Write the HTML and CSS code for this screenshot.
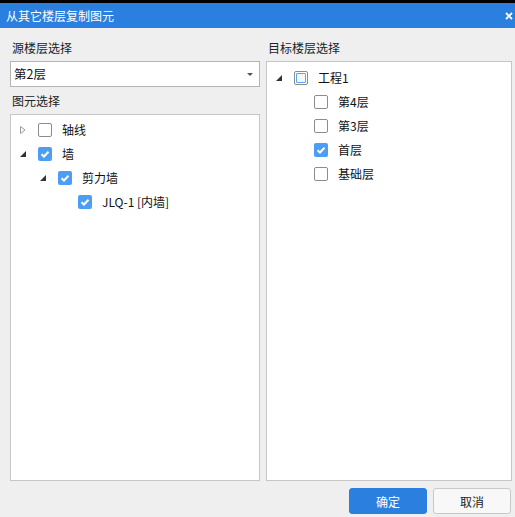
FILE: index.html
```html
<!DOCTYPE html>
<html lang="zh">
<head>
<meta charset="utf-8">
<title>从其它楼层复制图元</title>
<link rel="stylesheet" href="styles.css">
</head>
<body>
<div class="dialog">
  <div class="topline"></div>
  <div class="titlebar">
    <span class="title">从其它楼层复制图元</span>
    <svg class="close" width="8" height="8" viewBox="0 0 8 8"><path d="M1 1 L7 7 M7 1 L1 7" stroke="#fff" stroke-width="1.8"/></svg>
  </div>
  <div class="body">
    <div class="col left">
      <div class="label">源楼层选择</div>
      <div class="select">
        <span>第2层</span>
        <svg class="arrow" width="6" height="3" viewBox="0 0 6 3"><path d="M0 0 L6 0 L3 3 Z" fill="#555"/></svg>
      </div>
      <div class="label label2">图元选择</div>
      <div class="panel">
        <div class="row lv0">
          <span class="tog"><svg width="6" height="8" viewBox="0 0 6 8"><path d="M0.5 0.5 L5 4 L0.5 7.5 Z" fill="none" stroke="#9a9a9a"/></svg></span>
          <span class="cb"></span><span class="txt">轴线</span>
        </div>
        <div class="row lv0">
          <span class="tog"><svg width="6" height="6" viewBox="0 0 6 6"><path d="M6 0 L6 6 L0 6 Z" fill="#333"/></svg></span>
          <span class="cb on"><svg width="14" height="14" viewBox="0 0 14 14"><path d="M3.5 7.2 L6 9.5 L10.5 4.8" fill="none" stroke="#fff" stroke-width="2"/></svg></span><span class="txt">墙</span>
        </div>
        <div class="row lv1">
          <span class="tog"><svg width="6" height="6" viewBox="0 0 6 6"><path d="M6 0 L6 6 L0 6 Z" fill="#333"/></svg></span>
          <span class="cb on"><svg width="14" height="14" viewBox="0 0 14 14"><path d="M3.5 7.2 L6 9.5 L10.5 4.8" fill="none" stroke="#fff" stroke-width="2"/></svg></span><span class="txt">剪力墙</span>
        </div>
        <div class="row lv2">
          <span class="tog"></span>
          <span class="cb on"><svg width="14" height="14" viewBox="0 0 14 14"><path d="M3.5 7.2 L6 9.5 L10.5 4.8" fill="none" stroke="#fff" stroke-width="2"/></svg></span><span class="txt">JLQ-1 [内墙]</span>
        </div>
      </div>
    </div>
    <div class="col right">
      <div class="label">目标楼层选择</div>
      <div class="panel rpanel">
        <div class="row lv0">
          <span class="tog"><svg width="6" height="6" viewBox="0 0 6 6"><path d="M6 0 L6 6 L0 6 Z" fill="#333"/></svg></span>
          <span class="cb part"><span class="inner"></span></span><span class="txt">工程1</span>
        </div>
        <div class="row lv1">
          <span class="tog"></span>
          <span class="cb"></span><span class="txt">第4层</span>
        </div>
        <div class="row lv1">
          <span class="tog"></span>
          <span class="cb"></span><span class="txt">第3层</span>
        </div>
        <div class="row lv1">
          <span class="tog"></span>
          <span class="cb on"><svg width="14" height="14" viewBox="0 0 14 14"><path d="M3.5 7.2 L6 9.5 L10.5 4.8" fill="none" stroke="#fff" stroke-width="2"/></svg></span><span class="txt">首层</span>
        </div>
        <div class="row lv1">
          <span class="tog"></span>
          <span class="cb"></span><span class="txt">基础层</span>
        </div>
      </div>
    </div>
  </div>
  <div class="footer">
    <button class="btn primary">确定</button>
    <button class="btn">取消</button>
  </div>
</div>
</body>
</html>
```

FILE: styles.css
```css
* { box-sizing: border-box; }
html, body {
  margin: 0;
  padding: 0;
  width: 515px;
  height: 517px;
  overflow: hidden;
  background: #efefef;
  font-family: "Noto Sans CJK SC", "Noto Sans", sans-serif;
  font-size: 12px;
  color: #111;
}
.dialog {
  display: flex;
  flex-direction: column;
  height: 517px;
}
.topline {
  height: 3px;
  background: #000;
}
.titlebar {
  height: 25px;
  background: #2b7fde;
  display: flex;
  align-items: center;
  justify-content: space-between;
  padding: 0 2px 0 6px;
}
.title {
  color: #fff;
  font-size: 12px;
  line-height: 25px;
}
.close {
  display: block;
  margin-top: 1px;
}
.body {
  flex: 1;
  display: flex;
  gap: 6px;
  padding: 11px 3px 0 10px;
}
.col {
  display: flex;
  flex-direction: column;
}
.left { width: 250px; }
.right { width: 246px; }
.label {
  height: 18px;
  line-height: 18px;
  margin-bottom: 4px;
  color: #222;
  padding-left: 2px;
}
.label2 {
  margin-top: 5px;
}
.select {
  height: 26px;
  background: #fff;
  border: 1px solid #b4b4b4;
  display: flex;
  align-items: center;
  justify-content: space-between;
  padding: 0 6px 0 3px;
}
.select span {
  font-size: 12.5px;
  line-height: 24px;
}
.arrow { display: block; }
.panel {
  flex: 1;
  background: #fff;
  border: 1px solid #c6c6c6;
  padding-top: 3px;
}
.rpanel {
  padding-top: 4px;
}
.row {
  height: 24px;
  display: flex;
  align-items: center;
}
.lv0 { padding-left: 5px; }
.lv1 { padding-left: 25px; }
.lv2 { padding-left: 45px; }
.tog {
  width: 14px;
  height: 14px;
  display: flex;
  align-items: center;
  justify-content: center;
  margin-right: 8px;
}
.tog svg { display: block; }
.cb {
  width: 14px;
  height: 14px;
  border: 1px solid #8c8c8c;
  border-radius: 2px;
  background: #fff;
  margin-right: 10px;
  display: flex;
  align-items: center;
  justify-content: center;
  flex: none;
}
.cb.on {
  border: none;
  background: #4c9ef4;
}
.cb.on svg { display: block; }
.cb.part .inner {
  width: 10px;
  height: 10px;
  border: 1px solid #5ba3f3;
  border-radius: 1px;
  background: #f4f9ff;
}
.txt {
  line-height: 24px;
  white-space: nowrap;
}
.footer {
  height: 36px;
  display: flex;
  justify-content: flex-end;
  gap: 6px;
  padding: 7px 4px 3px 0;
}
.btn {
  width: 78px;
  height: 26px;
  border-radius: 3px;
  border: 1px solid #c8c8c8;
  background: #f8f8f8;
  font-family: "Noto Sans CJK SC", "Noto Sans", sans-serif;
  font-size: 12px;
  color: #222;
  padding: 0;
}
.btn.primary {
  background: #2b7fde;
  border-color: #2b7fde;
  color: #fff;
}
```
